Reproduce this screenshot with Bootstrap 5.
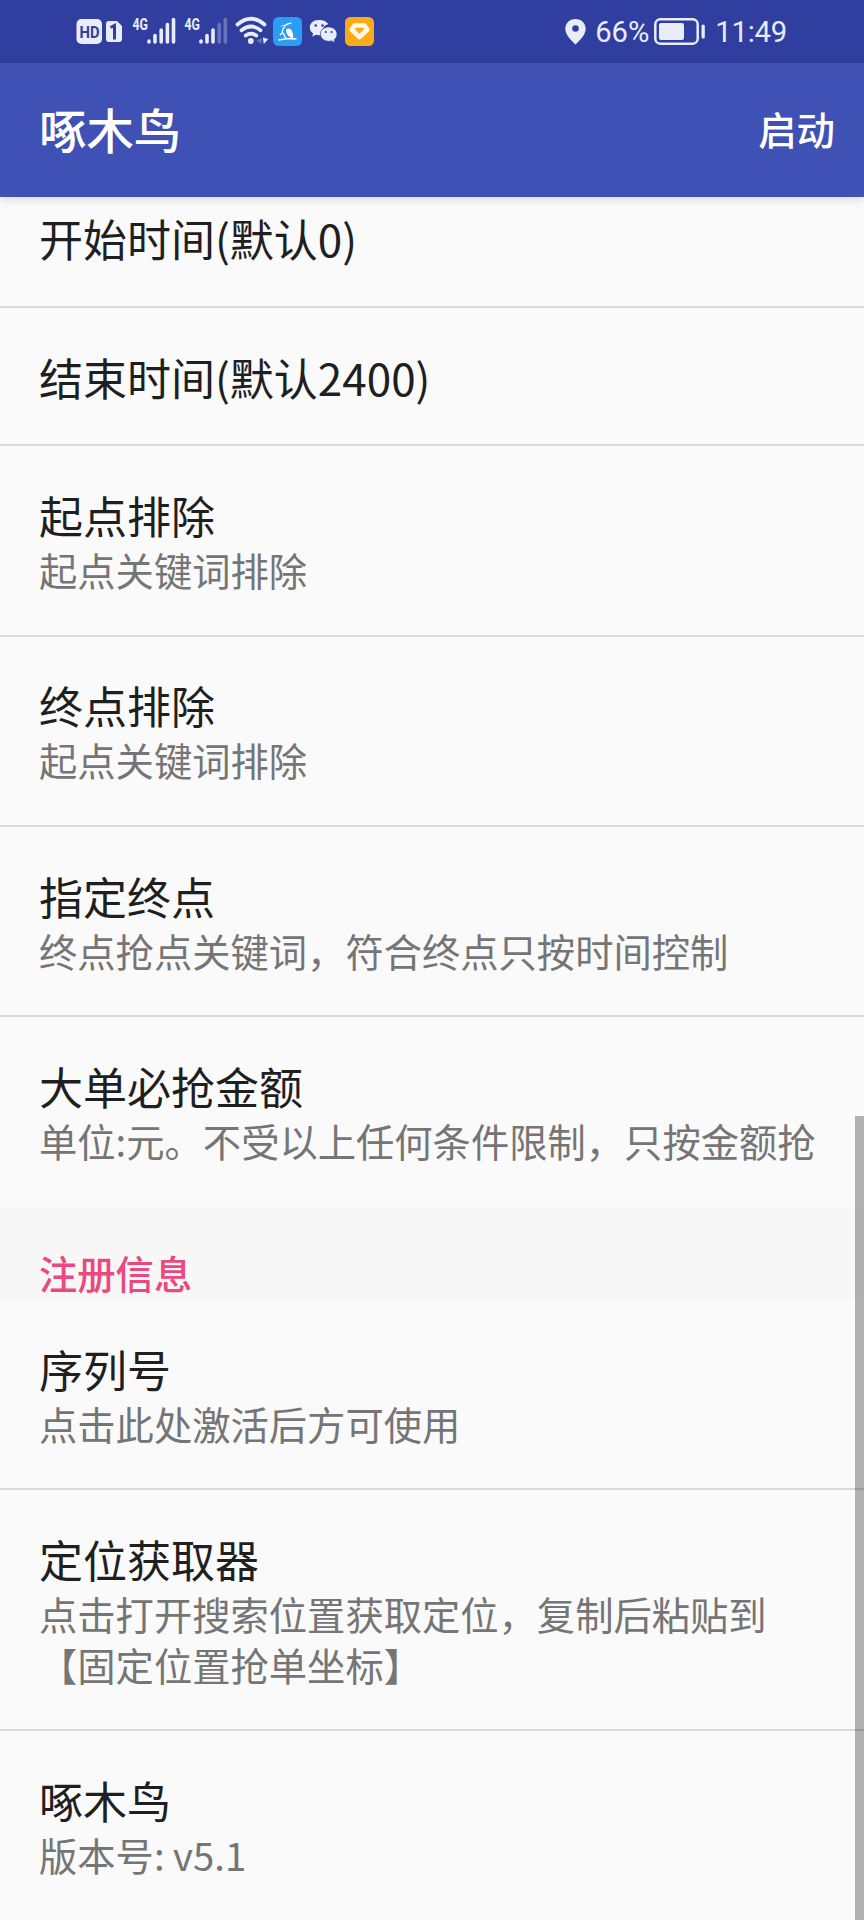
<!DOCTYPE html>
<html lang="zh-CN">
<head>
<meta charset="utf-8">
<meta name="viewport" content="width=device-width, initial-scale=1">
<title>啄木鸟</title>
<link href="https://cdn.jsdelivr.net/npm/bootstrap@5.3.0/dist/css/bootstrap.min.css" rel="stylesheet">
<style>
  body { font-family: "Noto Sans CJK SC", sans-serif; background: #fafafa; color: #1f1f1f; }
  .screen { width: 864px; height: 1920px; }
  .status-bar { height: 62.7px; background: #303f9f; color: #e8ecfb; font-family: Roboto, "Noto Sans CJK SC", sans-serif; font-size: 29.2px; line-height: 36px; }
  .status-bar svg { display: block; }
  .status-left { padding-left: 76px; }
  .status-right { padding-right: 77px; }
  .status-right span { padding-top: 2px; }
  .clock { margin-left: 10px; letter-spacing: -.2px; }
  .app-bar { height: 134px; background: #3f51b5; color: #fff; padding: 0 29px 3px 39px; box-shadow: 0 2px 10px rgba(0,0,0,.14); z-index: 2; }
  .app-title { font-size: 47.4px; font-weight: 500; line-height: 72px; padding-top: 2px; }
  .app-action { font-size: 38.4px; font-weight: 500; line-height: 58px; color: #fff; }
  .pref { padding: 39.8px 30px 0 39px; height: 190.3px; border-bottom: 2px solid #d9d9d9; }
  .pref-single { height: 138.4px; }
  .pref-first { height: 111.3px; padding-top: 12.8px; }
  .pref-tall { height: 240.6px; }
  .pref-end { border-bottom: 0; }
  .pref-name { font-size: 44px; line-height: 58px; }
  .pref-note { font-size: 38.3px; line-height: 50.3px; padding-top: 1px; color: #757575; white-space: nowrap; }
  .section-head { height: 92.6px; padding: 39px 39px 0; background: #f7f7f7; color: #ec4880; font-size: 38.3px; font-weight: 500; line-height: 52px; }
  .scroll-thumb { top: 1116px; right: 0; width: 9.5px; height: 804px; background: rgba(0,0,0,.29); z-index: 3; }
</style>
</head>
<body>
<div class="screen position-relative overflow-hidden d-flex flex-column">
  <header class="status-bar d-flex justify-content-between flex-shrink-0">
    <div class="status-left">
      <svg width="300" height="62" viewBox="76 0 300 62" fill="#e8ecfb">
        <!-- HD voice and SIM 1 -->
        <rect x="76.500" y="19" width="25.500" height="25" rx="5"/>
        <text x="79.500" y="38" font-family="Roboto" font-size="16.5" font-weight="700" fill="#303f9f" textLength="20" lengthAdjust="spacingAndGlyphs">HD</text>
        <path d="M109 21h8l5 5v13a3 3 0 0 1-3 3h-10a3 3 0 0 1-3-3V24a3 3 0 0 1 3-3z"/>
        <path d="M110.500 27.500l4-2v14" fill="none" stroke="#303f9f" stroke-width="3"/>
        <!-- mobile signals -->
        <text x="132.500" y="30" font-family="Roboto" font-size="16.500" font-weight="700" textLength="15.500" lengthAdjust="spacingAndGlyphs">4G</text>
        <g stroke="#e8ecfb" stroke-width="3.600" stroke-linecap="round">
          <path d="M149 41v1M155 35.500v6.500M161.200 30v12M167.400 24.500v17.500M173.500 19.500v22.500"/>
          <path d="M201 41v1M207 35.500v6.500M213 30v12"/>
          <path d="M219.200 24.500v17.500M225.300 19.500v22.500" opacity=".3"/>
        </g>
        <text x="184.500" y="30" font-family="Roboto" font-size="16.500" font-weight="700" textLength="15.500" lengthAdjust="spacingAndGlyphs">4G</text>
        <!-- wifi -->
        <g fill="none" stroke="#e8ecfb" stroke-width="3.700" stroke-linecap="round">
          <path d="M237.500 24.500q13.500-11.500 27 0M241.500 30.300q9.500-7.600 19 0M245.700 35.600q5.300-3.800 10.600 0"/>
        </g>
        <circle cx="250.800" cy="41" r="2.900"/>
        <path d="M261.500 38l-5 2.800 5 2.800z" opacity=".3"/>
        <path d="M262.800 37.500l5.500 1.500-4.500 5z"/>
        <!-- woodpecker app -->
        <rect x="273" y="17" width="29" height="29" rx="5.500" fill="#2a9df4"/>
        <path d="M279 26.500l6.500-2q2-1.800 6-2v1.300q-4 .6-5.500 2z" fill="#fff"/>
        <path d="M286 29.500q3.500-2.500 6 1.500 2 5.500.5 8.500-2.500-3-4.500-4-2-2-2-6z" fill="#fff"/>
        <path d="M285 26.500q-4.500 4.500-1.500 7.500l2.500 4.500M278.500 40l10-1.500 8 .5M283 32l-3 3" fill="none" stroke="#fff" stroke-width="1.300"/>
        <!-- chat bubbles -->
        <path d="M318.500 20c-5.100 0-8.700 3.300-8.700 7.500 0 2.500 1.300 4.600 3.300 6l-.8 3.300 3.500-2q4 1 6.500-.2c-1.500-6 3-10.200 6-10.400-1.300-2.700-5.200-4.200-9.800-4.200z"/>
        <path d="M328.600 26.900c-4.800 0-8.200 3.200-8.200 7.200s3.400 7.200 8.200 7.200q1.700 0 3-.4l3.200 1.800-.6-2.900c1.800-1.300 2.800-3.300 2.800-5.700 0-4-3.600-7.200-8.400-7.200z" stroke="#303f9f" stroke-width=".7"/>
        <g fill="#303f9f"><circle cx="315.700" cy="25.500" r="1.300"/><circle cx="322.500" cy="25.500" r="1.300"/><circle cx="325.800" cy="32" r="1.100"/><circle cx="331.600" cy="32" r="1.100"/></g>
        <!-- diamond app -->
        <rect x="345" y="17" width="29" height="29" rx="5.500" fill="#fbab16"/>
        <path d="M354.500 25.500h10l2.800 4-7.800 7.500-7.800-7.500z" fill="none" stroke="#fff8e5" stroke-width="4.600" stroke-linejoin="round"/>
      </svg>
    </div>
    <div class="status-right d-flex align-items-center">
      <svg width="22" height="62" viewBox="566 0 22 62"><path fill="#e8ecfb" fill-rule="evenodd" d="M576.500 19c-5.700 0-10.200 4.200-10.200 9.800 0 6.200 6.200 11.700 10.200 15.800 4-4.100 10.200-9.600 10.200-15.800 0-5.600-4.500-9.800-10.200-9.800zm0 6.200a3.300 3.300 0 1 1 0 6.600 3.300 3.300 0 0 1 0-6.600z"/></svg>
      <span class="ps-2">66%</span>
      <svg class="ms-1" width="52" height="62" viewBox="653 0 52 62" fill="#e8ecfb">
        <rect x="655.300" y="19.300" width="42.400" height="24.400" rx="5" fill="none" stroke="#e8ecfb" stroke-width="2.500"/>
        <rect x="659" y="23" width="25" height="17" rx="2"/>
        <rect x="701.500" y="24.500" width="3.300" height="14" rx="1.600"/>
      </svg>
      <span class="clock">11:49</span>
    </div>
  </header>

  <nav class="app-bar d-flex align-items-center justify-content-between flex-shrink-0 position-relative">
    <div class="app-title">啄木鸟</div>
    <div class="app-action" role="button">启动</div>
  </nav>

  <main class="flex-shrink-0">
    <div class="pref pref-first"><div class="pref-name">开始时间(默认0)</div></div>
    <div class="pref pref-single"><div class="pref-name">结束时间(默认2400)</div></div>
    <div class="pref"><div class="pref-name">起点排除</div><div class="pref-note">起点关键词排除</div></div>
    <div class="pref"><div class="pref-name">终点排除</div><div class="pref-note">起点关键词排除</div></div>
    <div class="pref"><div class="pref-name">指定终点</div><div class="pref-note">终点抢点关键词，符合终点只按时间控制</div></div>
    <div class="pref pref-end"><div class="pref-name">大单必抢金额</div><div class="pref-note">单位:元。不受以上任何条件限制，只按金额抢</div></div>
    <div class="section-head">注册信息</div>
    <div class="pref"><div class="pref-name">序列号</div><div class="pref-note">点击此处激活后方可使用</div></div>
    <div class="pref pref-tall"><div class="pref-name">定位获取器</div><div class="pref-note">点击打开搜索位置获取定位，复制后粘贴到<br>【固定位置抢单坐标】</div></div>
    <div class="pref pref-end"><div class="pref-name">啄木鸟</div><div class="pref-note">版本号: v5.1</div></div>
  </main>
  <div class="scroll-thumb position-absolute"></div>
</div>
<script src="https://cdn.jsdelivr.net/npm/bootstrap@5.3.0/dist/js/bootstrap.bundle.min.js"></script>
</body>
</html>
